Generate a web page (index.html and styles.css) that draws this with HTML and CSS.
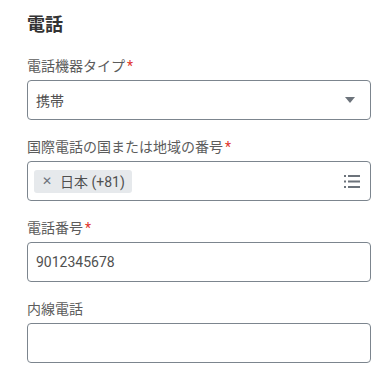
FILE: index.html
```html
<!DOCTYPE html>
<html>
  <head>
    <meta charset="UTF-8" />
    <title>電話</title>
    <link rel="stylesheet" href="styles.css">
  </head>
  <body>
    <section class="phone">
      <h2>電話</h2>

      <div class="field">
        <label>電話機器タイプ<span class="req">*</span></label>
        <div class="box select">
          <span>携帯</span>
          <svg class="arrow" width="10" height="6" viewBox="0 0 10 6"><path d="M0 0h10L5 6z" fill="#6c737b"/></svg>
        </div>
      </div>

      <div class="field">
        <label>国際電話の国または地域の番号<span class="req">*</span></label>
        <div class="box multi">
          <span class="chip"><span class="chip-x">✕</span>日本 (+81)</span>
          <svg class="list" width="16" height="13" viewBox="0 0 16 13">
            <rect x="0" y="0" width="2" height="2" fill="#6c737b"/>
            <rect x="4" y="0" width="12" height="2" fill="#6c737b"/>
            <rect x="0" y="5.5" width="2" height="2" fill="#6c737b"/>
            <rect x="4" y="5.5" width="12" height="2" fill="#6c737b"/>
            <rect x="0" y="11" width="2" height="2" fill="#6c737b"/>
            <rect x="4" y="11" width="12" height="2" fill="#6c737b"/>
          </svg>
        </div>
      </div>

      <div class="field">
        <label>電話番号<span class="req">*</span></label>
        <div class="box">9012345678</div>
      </div>

      <div class="field">
        <label>内線電話</label>
        <div class="box"></div>
      </div>
    </section>
  </body>
</html>
```

FILE: styles.css
```css
body {
  margin: 0;
  font-family: Roboto, "Noto Sans CJK JP", sans-serif;
  color: #444;
  background: #fff;
}

.phone {
  padding: 13px 20px 0 27px;
}

h2 {
  margin: 0;
  font-size: 18px;
  line-height: 24px;
  font-weight: bold;
  color: #333;
}

.field {
  margin-top: 19px;
}

.field + .field {
  margin-top: 17px;
}

label {
  display: block;
  font-size: 14px;
  line-height: 20px;
  color: #5c5c5c;
  margin-bottom: 4px;
}

.req {
  color: #e0342c;
  margin-left: 2px;
}

.box {
  box-sizing: border-box;
  height: 40px;
  border: 1px solid #7c858e;
  border-radius: 4px;
  padding: 0 8px;
  display: flex;
  align-items: center;
  font-size: 14px;
  color: #505050;
}

.select,
.multi {
  justify-content: space-between;
}

.arrow {
  margin-right: 7px;
}

.multi {
  padding-left: 6px;
}

.chip {
  display: inline-flex;
  align-items: center;
  height: 23px;
  padding: 0 7px 0 8px;
  background: #e6e9ec;
  border-radius: 3px;
  font-size: 14px;
  color: #505050;
}

.chip-x {
  font-size: 12px;
  color: #6c737b;
  margin-right: 8px;
}

.list {
  margin-right: 2px;
}
```
